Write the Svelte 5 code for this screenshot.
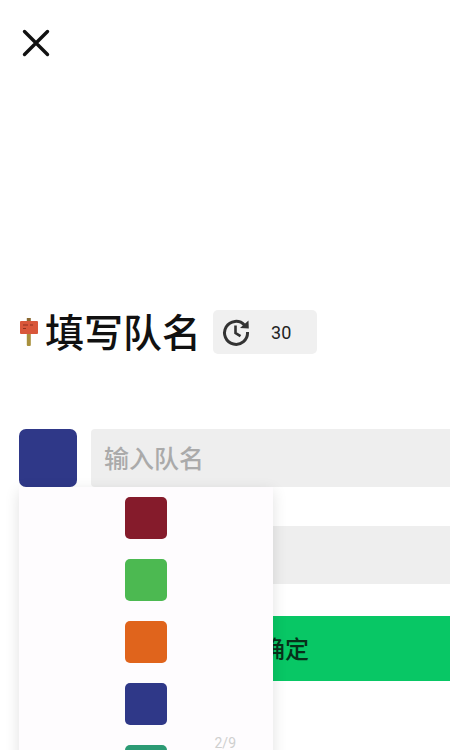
<script lang="ts">
	const colors = ["#851b2b", "#4cb951", "#e0641c", "#2f3888", "#2c9a74"];
</script>

<div class="page">
	<button class="close" aria-label="关闭">
		<svg viewBox="0 0 28 28" width="28" height="28">
			<path d="M2.5 2.5 25.5 25.5M25.5 2.5 2.5 25.5" fill="none" stroke="#111" stroke-width="3.4" stroke-linecap="round" />
		</svg>
	</button>

	<div class="heading">
		<svg class="sign" viewBox="0 0 20 28" width="20" height="28">
			<rect x="7.8" y="13" width="4" height="15" rx="1" fill="#a8903c" />
			<rect x="7.8" y="0" width="4" height="4" fill="#8a6a32" />
			<rect x="1" y="3" width="18" height="13" rx="1" fill="#d9573a" />
			<path d="M4 7h5M11 7h3M4 10.5h3" stroke="#8f3320" stroke-width="1" />
		</svg>
		<h1>填写队名</h1>
		<div class="timer">
			<svg viewBox="0 0 28 28" width="28" height="28">
				<path d="M22.6 7.2A11.5 11.5 0 1 0 25.5 14" fill="none" stroke="#333" stroke-width="3" stroke-linecap="butt" />
				<path d="M18 10 26.8 10.5 26.5 2.5Z" fill="#333" />
				<path d="M13.5 7.5v7.5l5 3.2" fill="none" stroke="#333" stroke-width="2.6" />
			</svg>
			<span>30</span>
		</div>
	</div>

	<div class="form">
		<div class="name-row">
			<button class="current" aria-label="队伍颜色"></button>
			<div class="field placeholder">输入队名</div>

			<div class="picker">
				{#each colors as color}
					<button class="swatch" aria-label={color} style="background-color: {color}"></button>
				{/each}
				<span class="pager">2/9</span>
			</div>
		</div>
		<div class="field second"></div>
		<button class="confirm">确定</button>
	</div>
</div>

<style>
	:global(body) {
		background: #fff;
		overflow: hidden;
	}

	.page {
		height: 750px;
		overflow: hidden;
		font-family: "Noto Sans CJK SC", "Liberation Sans", sans-serif;
		box-sizing: border-box;
		padding: 29px 0 0 19px;
	}

	.close {
		display: block;
		appearance: none;
		border: none;
		background: none;
		padding: 0;
		margin-left: 3px;
		height: 28px;
	}

	.close svg {
		display: block;
	}

	.heading {
		display: flex;
		align-items: center;
		margin-top: 253px;
		height: 44px;
	}

	.sign {
		flex: none;
		margin-right: 6px;
	}

	h1 {
		margin: 0 0 3px;
		font-size: 39px;
		font-weight: 500;
		color: #111;
		white-space: nowrap;
		line-height: 41px;
	}

	.timer {
		display: flex;
		align-items: center;
		width: 104px;
		height: 44px;
		box-sizing: border-box;
		padding-left: 9px;
		margin-left: 12px;
		border-radius: 5px;
		background: #f0f0f0;
	}

	.timer svg {
		flex: none;
	}

	.timer span {
		margin-left: 21px;
		font-family: Roboto, "Liberation Sans", sans-serif;
		font-size: 18px;
		color: #222;
	}

	.form {
		display: flex;
		flex-direction: column;
		margin-top: 75px;
		width: 532px;
	}

	.name-row {
		position: relative;
		display: flex;
		gap: 14px;
	}

	.current {
		appearance: none;
		border: none;
		padding: 0;
		flex: none;
		width: 58px;
		height: 58px;
		border-radius: 7px;
		background: #2f3888;
	}

	.field {
		height: 58px;
		border-radius: 4px;
		background: #eeeeee;
	}

	.placeholder {
		flex: 1;
		box-sizing: border-box;
		padding-left: 13px;
		line-height: 56px;
		font-size: 25px;
		font-weight: 500;
		color: #aaaaaa;
	}

	.second {
		margin: 39px 0 0 72px;
	}

	.confirm {
		appearance: none;
		border: none;
		margin-top: 32px;
		height: 65px;
		padding: 0 0 3px;
		background: #08c765;
		color: #07301a;
		font-family: inherit;
		font-size: 24px;
		font-weight: 500;
		text-align: center;
	}

	.picker {
		position: absolute;
		top: 58px;
		left: 0;
		width: 254px;
		height: 300px;
		box-sizing: border-box;
		padding-top: 10px;
		display: flex;
		flex-direction: column;
		align-items: center;
		gap: 20px;
		background: #fefcfe;
		box-shadow: 0 4px 14px rgba(0, 0, 0, 0.12);
	}

	.swatch {
		appearance: none;
		border: none;
		padding: 0;
		flex: none;
		width: 42px;
		height: 42px;
		border-radius: 5px;
	}

	.pager {
		position: absolute;
		top: 250px;
		right: 37px;
		font-family: Roboto, "Liberation Sans", sans-serif;
		font-size: 14px;
		line-height: 12px;
		color: #cfcfcf;
	}
</style>
